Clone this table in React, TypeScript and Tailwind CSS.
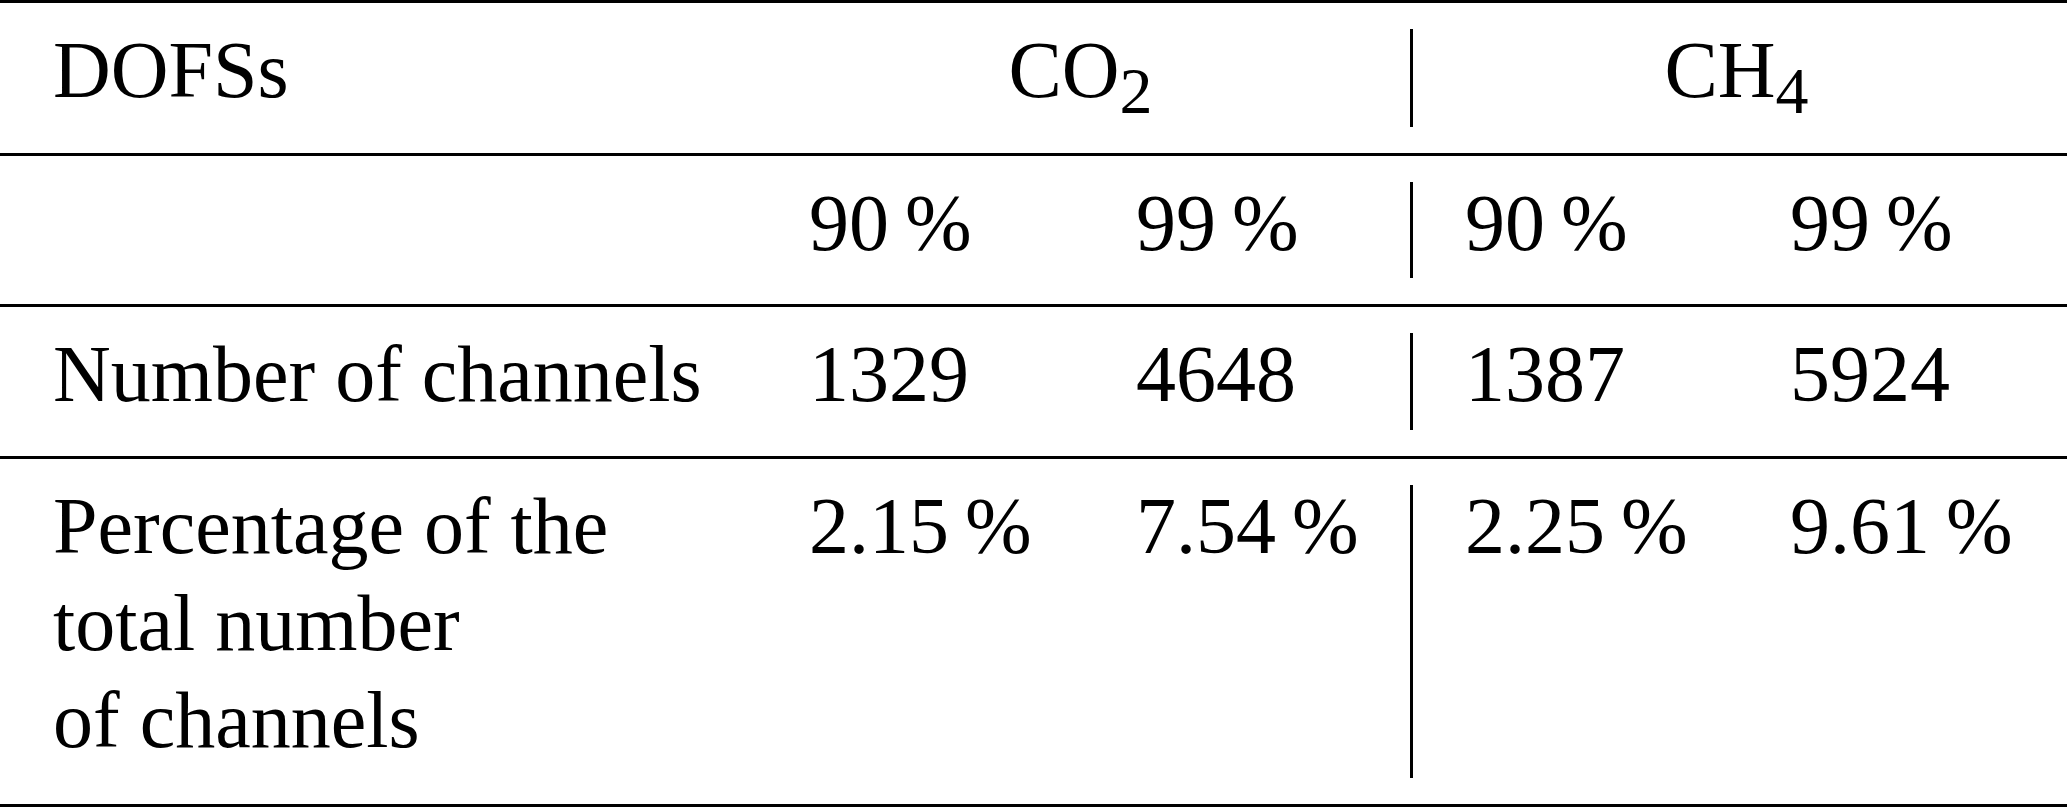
const cols = "grid grid-cols-[809px_327px_274px_3px_377px_1fr]";

const rows = [
  { label: ["Number of channels"], values: ["1329", "4648", "1387", "5924"], pb: "pb-[33px]" },
  {
    label: ["Percentage of the", "total number", "of channels"],
    values: ["2.15\u2009%", "7.54\u2009%", "2.25\u2009%", "9.61\u2009%"],
    pb: "pb-[35px]",
  },
];

function Sep() {
  return <div className="my-[26px] bg-black" />;
}

export default function App() {
  return (
    <div className="w-[2067px] h-[807px] bg-white text-black font-['Liberation_Serif','Times_New_Roman',serif] text-[80px] leading-[97px]">
      {/* header: gas names */}
      <div className={`${cols} border-t-[3px] border-black`}>
        <div className="pl-[53px] pt-[19px] pb-[34px]">DOFSs</div>
        <div className="col-span-2 pr-[58px] pt-[19px] pb-[34px] text-center">
          CO<span className="text-[66px] leading-[0px] align-[-16px]">2</span>
        </div>
        <Sep />
        <div className="col-span-2 pl-[52px] pr-[59px] pt-[19px] pb-[34px] text-center">
          CH<span className="text-[66px] leading-[0px] align-[-16px]">4</span>
        </div>
      </div>

      {/* header: thresholds */}
      <div className={`${cols} border-t-[3px] border-black`}>
        <div className="pt-[19px] pb-[32px]" />
        <div className="pt-[19px] pb-[32px]">90{"\u2009"}%</div>
        <div className="pt-[19px] pb-[32px]">99{"\u2009"}%</div>
        <Sep />
        <div className="pl-[52px] pt-[19px] pb-[32px]">90{"\u2009"}%</div>
        <div className="pt-[19px] pb-[32px]">99{"\u2009"}%</div>
      </div>

      {rows.map((r, i) => (
        <div key={i} className={`${cols} border-t-[3px] border-black ${i === rows.length - 1 ? "border-b-[3px]" : ""}`}>
          <div className={`pl-[53px] pt-[19px] ${r.pb}`}>
            {r.label.map((l, j) => (
              <div key={j}>{l}</div>
            ))}
          </div>
          <div className={`pt-[19px] ${r.pb}`}>{r.values[0]}</div>
          <div className={`pt-[19px] ${r.pb}`}>{r.values[1]}</div>
          <Sep />
          <div className={`pl-[52px] pt-[19px] ${r.pb}`}>{r.values[2]}</div>
          <div className={`pt-[19px] ${r.pb}`}>{r.values[3]}</div>
        </div>
      ))}
    </div>
  );
}
